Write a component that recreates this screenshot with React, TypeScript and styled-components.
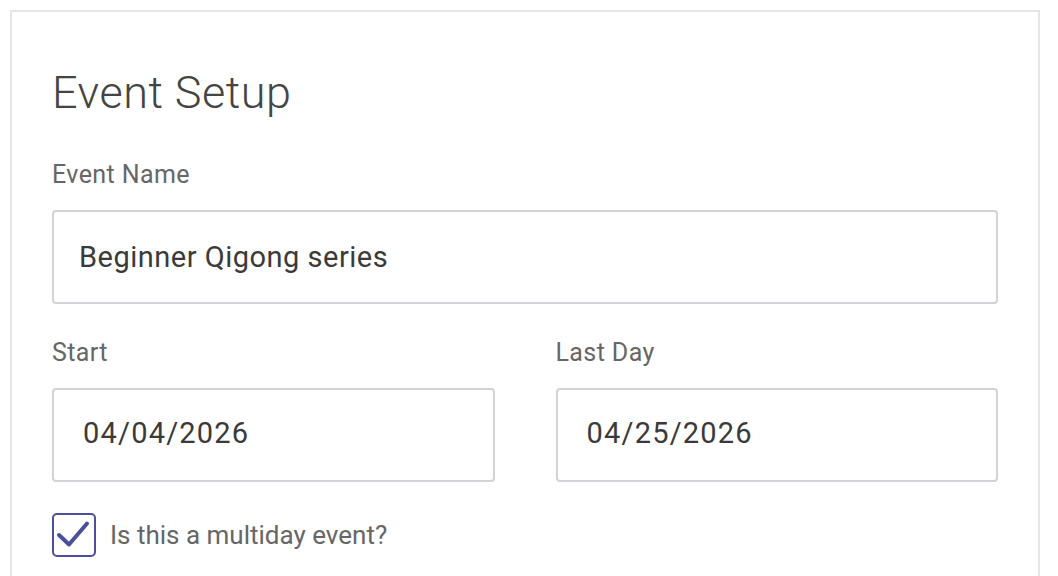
import React from 'react';
import styled, { createGlobalStyle } from 'styled-components';

const GlobalStyle = createGlobalStyle`
  html, body {
    margin: 0;
    padding: 0;
    background: #ffffff;
    font-family: Roboto, "Liberation Sans", Arial, sans-serif;
  }
`;

const Card = styled.section`
  box-sizing: border-box;
  width: 1030px;
  min-height: 600px;
  margin: 10px 0 0 10px;
  padding: 58px 40px 40px 40px;
  border: 2px solid #e4e5ea;
  background: #fff;
`;

const Title = styled.h1`
  margin: 0;
  font-size: 45px;
  line-height: 1;
  font-weight: 300;
  letter-spacing: 0.5px;
  color: #444444;
`;

const Field = styled.div`
  display: flex;
  flex-direction: column;
`;

const Label = styled.label<{ $top: number }>`
  margin-top: ${(p) => p.$top}px;
  margin-bottom: 23px;
  font-size: 25px;
  line-height: 1;
  letter-spacing: 0.4px;
  color: #666666;
`;

const TextInput = styled.input<{ $pad: number; $spacing: number; $lift?: number }>`
  box-sizing: border-box;
  width: 100%;
  height: 94px;
  padding: 0 ${(p) => p.$pad}px ${(p) => p.$lift ?? 0}px;
  border: 2px solid #d2d2d7;
  border-radius: 4px;
  font-family: Roboto, "Liberation Sans", Arial, sans-serif;
  font-size: 29px;
  letter-spacing: ${(p) => p.$spacing}px;
  color: #3a3a3a;
  background: #fff;
  outline: none;
`;

const Row = styled.div`
  display: grid;
  grid-template-columns: 1fr 1fr;
  column-gap: 61px;
`;

const CheckRow = styled.label`
  display: flex;
  align-items: center;
  gap: 14px;
  margin-top: 31px;
  cursor: pointer;
`;

const Box = styled.span`
  box-sizing: border-box;
  width: 44px;
  height: 44px;
  border: 2px solid #4b4f9c;
  border-radius: 5px;
  display: flex;
  align-items: center;
  justify-content: center;
`;

const CheckText = styled.span`
  font-size: 26px;
  color: #666666;
`;

export default function App() {
  return (
    <>
      <GlobalStyle />
      <Card>
        <Title>Event Setup</Title>
        <Field>
          <Label $top={47}>Event Name</Label>
          <TextInput $pad={25} $spacing={0.5} defaultValue="Beginner Qigong series" />
        </Field>
        <Row>
          <Field>
            <Label $top={36}>Start</Label>
            <TextInput $pad={29} $spacing={1.2} $lift={5} defaultValue="04/04/2026" />
          </Field>
          <Field>
            <Label $top={36}>Last Day</Label>
            <TextInput $pad={29} $spacing={1.2} $lift={5} defaultValue="04/25/2026" />
          </Field>
        </Row>
        <CheckRow>
          <Box>
            <svg width="44" height="44" viewBox="0 0 44 44" style={{ margin: -2 }}>
              <polyline
                points="7,22 17,31.5 35,10.5"
                fill="none"
                stroke="#4b4f9c"
                strokeWidth="4"
                strokeLinecap="round"
                strokeLinejoin="round"
              />
            </svg>
          </Box>
          <CheckText>Is this a multiday event?</CheckText>
        </CheckRow>
      </Card>
    </>
  );
}
